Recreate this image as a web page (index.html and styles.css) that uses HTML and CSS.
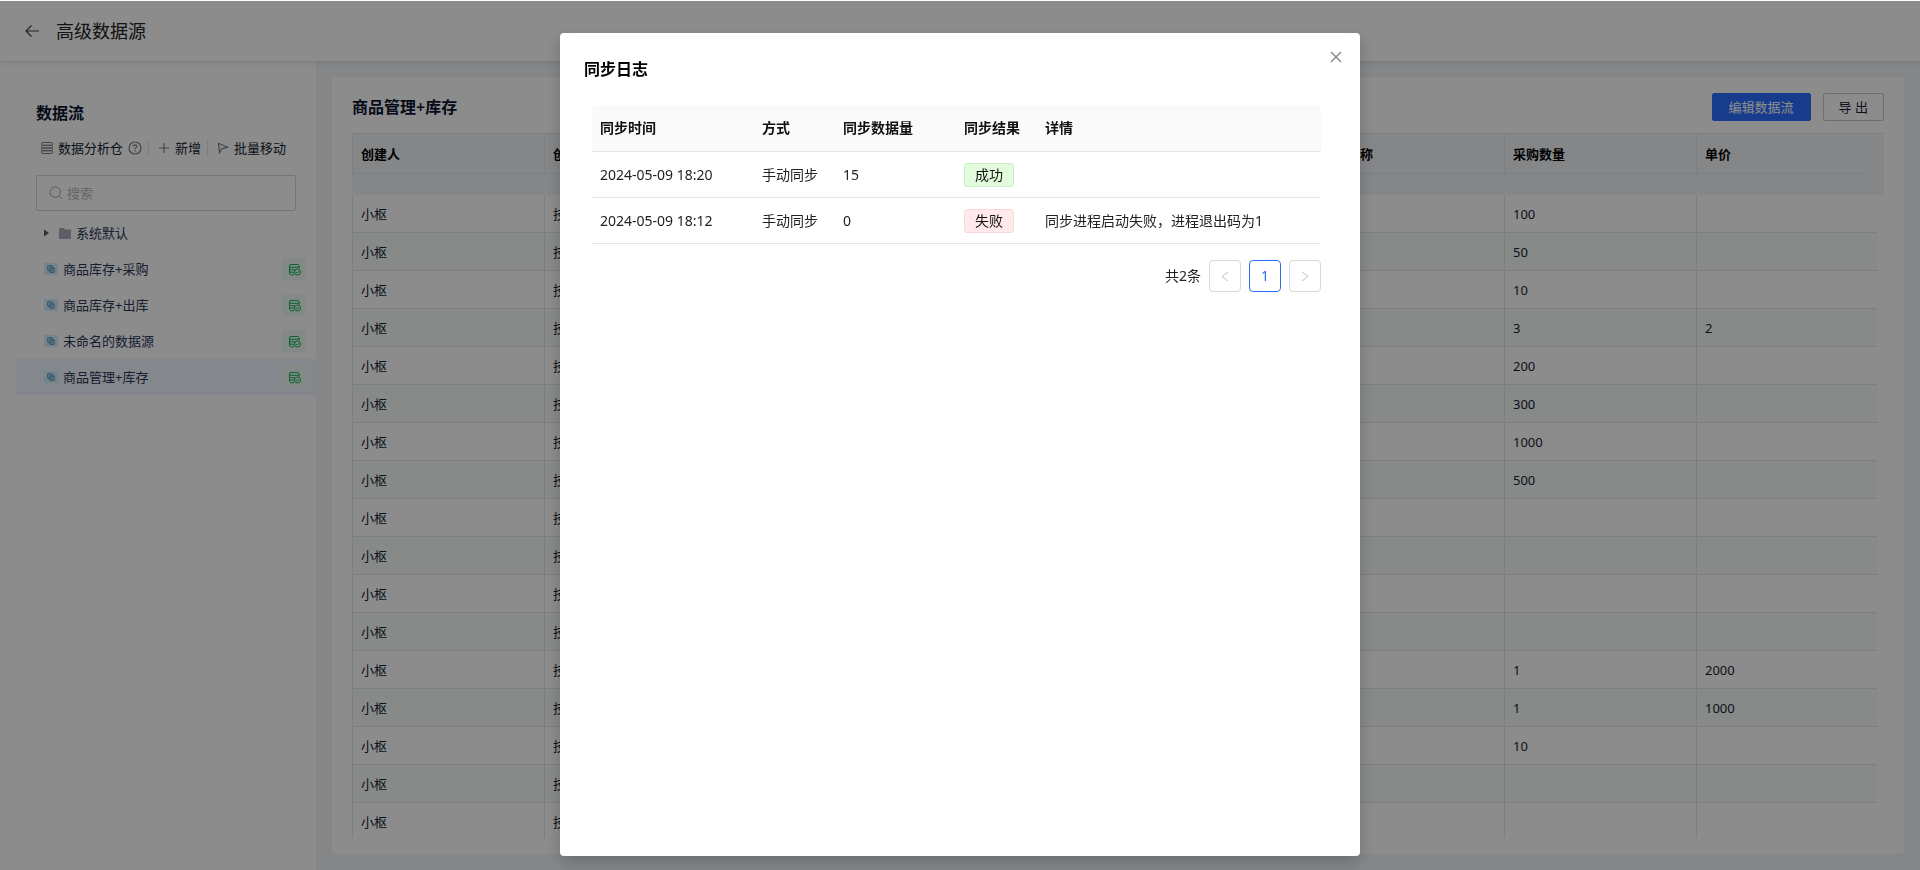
FILE: index.html
```html
<!DOCTYPE html>
<html lang="zh-CN">
<head>
    <meta charset="UTF-8">
    <meta name="viewport" content="width=device-width, initial-scale=1.0">
    <title>高级数据源</title>
    <link rel="stylesheet" href="styles.css">
</head>
<body>
    <svg class="sprite" aria-hidden="true">
        <symbol id="icon-db" viewBox="0 0 12 12">
            <g fill="none" stroke="currentColor">
                <rect x=".5" y=".5" width="11" height="3" rx="1.500"/>
                <rect x=".5" y="3.200" width="11" height="3" rx="1.500"/>
                <rect x=".5" y="5.900" width="11" height="3" rx="1.500"/>
                <rect x=".5" y="8.500" width="11" height="3" rx="1.500"/>
            </g>
        </symbol>
        <symbol id="icon-synced" viewBox="0 0 12 12">
            <g fill="none" stroke="currentColor">
                <rect x=".5" y=".5" width="9.500" height="2.800" rx="1.400"/>
                <path d="M.5 2v7.200c0 .9.800 1.600 2 1.600H5M.5 4.300c0 .8.800 1.500 2 1.500h3.500M.5 6.800c0 .8.800 1.500 2 1.500H5M10 2v2.500"/>
                <circle cx="8.500" cy="8" r="3"/>
                <path d="M7.200 8l1 1 1.700-2"/>
            </g>
        </symbol>
        <symbol id="icon-flow" viewBox="0 0 14 12">
            <rect width="14" height="12" rx="1" fill="#d5efff"/>
            <g fill="none" stroke="#6fa9c8" stroke-width="1.400">
                <rect x="3.700" y="2.700" width="4.500" height="4.500" rx="1"/>
                <rect x="5.700" y="4.700" width="4.500" height="4.500" rx="1"/>
            </g>
        </symbol>
    </svg>

    <header class="topbar">
        <button class="back-btn" type="button" aria-label="返回">
            <svg width="16" height="14" viewBox="0 0 16 14"><path d="M7.500 1.500L2 7l5.500 5.500M2 7h13" fill="none" stroke="currentColor" stroke-width="1.200"/></svg>
        </button>
        <h1>高级数据源</h1>
    </header>

    <div class="layout">
        <aside class="sidebar">
            <h2>数据流</h2>
            <div class="tools">
                <button type="button">
                    <svg width="12" height="12"><use href="#icon-db"/></svg>数据分析仓<svg width="14" height="14" viewBox="0 0 14 14"><g fill="none" stroke="currentColor" stroke-width="1.200"><circle cx="7" cy="7" r="6"/><path d="M5.200 5.600c0-2.300 3.600-2.300 3.600 0 0 1.200-1.800 1.200-1.800 2.600M7 9.300v1.200"/></g></svg>
                </button>
                <button type="button">
                    <svg width="12" height="12" viewBox="0 0 12 12"><path d="M6 1v10M1 6h10" stroke="currentColor" stroke-width="1.200"/></svg>新增
                </button>
                <button type="button">
                    <svg width="12" height="12" viewBox="0 0 12 12"><path d="M1.500 1.200l9 4-5.500 1.500-2.500 4z" fill="none" stroke="currentColor" stroke-width="1.200"/></svg>批量移动
                </button>
            </div>
            <label class="search">
                <svg width="14" height="14" viewBox="0 0 14 14"><path d="M9.800 9.800L13 13M11.500 6.200A5.200 5.200 0 1 1 1 6.200a5.200 5.200 0 0 1 10.500 0z" fill="none" stroke="currentColor"/></svg>
                <input type="text" placeholder="搜索" aria-label="搜索">
            </label>
            <ul class="tree">
                <li class="folder">
                    <svg class="caret" width="6" height="8" viewBox="0 0 6 8"><path d="M0 .5l5 3.500-5 3.500z" fill="currentColor"/></svg>
                    <svg class="dir" width="12" height="12" viewBox="0 0 12 12"><path d="M0 1h5l1 1.500h6V12H0z" fill="currentColor"/></svg>
                    <a href="#default">系统默认</a>
                </li>
                <li>
                    <svg width="14" height="12"><use href="#icon-flow"/></svg>
                    <a href="#flow1">商品库存+采购</a>
                    <span class="state"><svg width="12" height="12"><use href="#icon-synced"/></svg></span>
                </li>
                <li>
                    <svg width="14" height="12"><use href="#icon-flow"/></svg>
                    <a href="#flow2">商品库存+出库</a>
                    <span class="state"><svg width="12" height="12"><use href="#icon-synced"/></svg></span>
                </li>
                <li>
                    <svg width="14" height="12"><use href="#icon-flow"/></svg>
                    <a href="#flow3">未命名的数据源</a>
                    <span class="state"><svg width="12" height="12"><use href="#icon-synced"/></svg></span>
                </li>
                <li class="active">
                    <svg width="14" height="12"><use href="#icon-flow"/></svg>
                    <a href="#flow4">商品管理+库存</a>
                    <span class="state"><svg width="12" height="12"><use href="#icon-synced"/></svg></span>
                </li>
            </ul>
        </aside>

        <main class="card">
            <div class="card-head">
                <h2>商品管理+库存</h2>
                <button class="btn btn-primary" type="button">编辑数据流</button>
                <button class="btn" type="button">导 出</button>
            </div>
            <div class="grid-head">
                <table class="grid">
                    <thead>
                        <tr><th>创建人</th><th>创建人部门</th><th></th><th></th><th></th><th>商品名称</th><th>采购数量</th><th>单价</th></tr>
                    </thead>
                </table>
            </div>
            <div class="grid-body">
                <table class="grid">
                    <tbody>
                        <tr><td>小枢</td><td>技术部</td><td></td><td></td><td></td><td></td><td>100</td><td></td></tr>
                        <tr><td>小枢</td><td>技术部</td><td></td><td></td><td></td><td></td><td>50</td><td></td></tr>
                        <tr><td>小枢</td><td>技术部</td><td></td><td></td><td></td><td></td><td>10</td><td></td></tr>
                        <tr><td>小枢</td><td>技术部</td><td></td><td></td><td></td><td></td><td>3</td><td>2</td></tr>
                        <tr><td>小枢</td><td>技术部</td><td></td><td></td><td></td><td></td><td>200</td><td></td></tr>
                        <tr><td>小枢</td><td>技术部</td><td></td><td></td><td></td><td></td><td>300</td><td></td></tr>
                        <tr><td>小枢</td><td>技术部</td><td></td><td></td><td></td><td></td><td>1000</td><td></td></tr>
                        <tr><td>小枢</td><td>技术部</td><td></td><td></td><td></td><td></td><td>500</td><td></td></tr>
                        <tr><td>小枢</td><td>技术部</td><td></td><td></td><td></td><td></td><td></td><td></td></tr>
                        <tr><td>小枢</td><td>技术部</td><td></td><td></td><td></td><td></td><td></td><td></td></tr>
                        <tr><td>小枢</td><td>技术部</td><td></td><td></td><td></td><td></td><td></td><td></td></tr>
                        <tr><td>小枢</td><td>技术部</td><td></td><td></td><td></td><td></td><td></td><td></td></tr>
                        <tr><td>小枢</td><td>技术部</td><td></td><td></td><td></td><td></td><td>1</td><td>2000</td></tr>
                        <tr><td>小枢</td><td>技术部</td><td></td><td></td><td></td><td></td><td>1</td><td>1000</td></tr>
                        <tr><td>小枢</td><td>技术部</td><td></td><td></td><td></td><td></td><td>10</td><td></td></tr>
                        <tr><td>小枢</td><td>技术部</td><td></td><td></td><td></td><td></td><td></td><td></td></tr>
                        <tr><td>小枢</td><td>技术部</td><td></td><td></td><td></td><td></td><td></td><td></td></tr>
                    </tbody>
                </table>
            </div>
        </main>
    </div>

    <div class="mask">
        <div class="modal" role="dialog" aria-labelledby="modal-title">
            <button class="close-btn" type="button" aria-label="关闭">
                <svg width="12" height="12" viewBox="0 0 12 12"><path d="M1 1l10 10M11 1L1 11" stroke="currentColor" stroke-width="1.500"/></svg>
            </button>
            <h2 id="modal-title">同步日志</h2>
            <div class="modal-body">
                <table class="log">
                    <colgroup>
                        <col class="col-time"><col class="col-mode"><col class="col-count"><col class="col-result"><col>
                    </colgroup>
                    <thead>
                        <tr><th>同步时间</th><th>方式</th><th>同步数据量</th><th>同步结果</th><th>详情</th></tr>
                    </thead>
                    <tbody>
                        <tr><td>2024-05-09 18:20</td><td>手动同步</td><td>15</td><td><span class="tag tag-ok">成功</span></td><td></td></tr>
                        <tr><td>2024-05-09 18:12</td><td>手动同步</td><td>0</td><td><span class="tag tag-fail">失败</span></td><td>同步进程启动失败，进程退出码为1</td></tr>
                    </tbody>
                </table>
                <div class="pager">
                    <span>共2条</span>
                    <button type="button" disabled aria-label="上一页"><svg width="10" height="12" viewBox="0 0 10 12"><path d="M8 2L2 6.500 8 11" fill="none" stroke="currentColor"/></svg></button>
                    <button type="button" class="current">1</button>
                    <button type="button" disabled aria-label="下一页"><svg width="10" height="12" viewBox="0 0 10 12"><path d="M2 2l6 4.500L2 11" fill="none" stroke="currentColor"/></svg></button>
                </div>
            </div>
        </div>
    </div>
</body>
</html>
```

FILE: styles.css
```css
* {
    box-sizing: border-box;
}
body {
    margin: 0;
    height: 100vh;
    display: flex;
    flex-direction: column;
    overflow: hidden;
    font-family: "Noto Sans", "Noto Sans CJK SC", sans-serif;
    font-size: 13px;
    line-height: 20px;
    color: #141e31;
    background: #f2f4f7;
}
h1, h2 {
    margin: 0;
    font-size: 16px;
    line-height: 24px;
    font-weight: 600;
    color: #0c1430;
}
button, input {
    font: inherit;
    color: inherit;
}
button {
    padding: 0;
    border: none;
    background: none;
    cursor: pointer;
}
a {
    color: inherit;
    text-decoration: none;
}
.sprite {
    display: none;
}

/* top bar */
.topbar {
    position: relative;
    display: flex;
    align-items: center;
    gap: 16px;
    height: 62px;
    flex: none;
    padding: 1px 24px 0;
    background: #fff;
    border-bottom: 1px solid #e4e6ea;
    box-shadow: 0 1px 4px rgba(0, 0, 0, 0.1);
}
.topbar h1 {
    font-size: 18px;
    font-weight: 400;
    color: #222;
}
.back-btn {
    display: flex;
    color: #444;
}

.layout {
    display: flex;
    flex: 1;
    min-height: 0;
}

/* sidebar */
.sidebar {
    width: 316px;
    flex: none;
    padding: 39px 0 0 16px;
    background: #fff;
}
.sidebar h2 {
    padding-left: 20px;
}
.tools {
    display: flex;
    align-items: center;
    margin: 13px 0 17px 25px;
}
.tools button {
    display: flex;
    align-items: center;
    gap: 5px;
}
.tools button + button {
    margin-left: 6px;
    padding-left: 9px;
    border-left: 1px solid #e4e6ea;
    line-height: 16px;
}
.tools svg {
    color: #7b7f8c;
}
.search {
    display: flex;
    align-items: center;
    gap: 4px;
    height: 36px;
    margin: 0 20px;
    padding: 0 12px;
    border: 1px solid #d4d4d6;
    border-radius: 2px;
    color: #a6a8ae;
}
.search input {
    flex: 1;
    min-width: 0;
    border: none;
    outline: none;
    background: none;
    padding: 0;
}
.search input::placeholder {
    color: #b8b8bc;
}
.tree {
    list-style: none;
    margin: 4px 0 0;
    padding: 0;
}
.tree li {
    display: flex;
    align-items: center;
    gap: 5px;
    height: 36px;
    padding: 0 10px 0 28px;
    color: #2a3654;
}
.tree .caret {
    color: #555a66;
}
.tree .dir {
    margin-left: 4px;
    color: #a9abb9;
}
.tree .active {
    background: #f0f7ff;
}
.state {
    display: flex;
    align-items: center;
    justify-content: center;
    width: 24px;
    height: 22px;
    margin-left: auto;
    padding: 2px 0 0 2px;
    border-radius: 4px;
    background: #eef9f2;
    color: #0fae57;
}

/* data card */
.card {
    flex: 1;
    min-width: 0;
    display: flex;
    flex-direction: column;
    margin: 15px 16px 16px;
    padding: 0 20px 16px;
    background: #fff;
    border-radius: 4px;
}
.card-head {
    display: flex;
    align-items: center;
    gap: 12px;
    height: 56px;
    flex: none;
    padding-top: 4px;
}
.card-head h2 {
    margin-right: auto;
}
.btn {
    height: 28px;
    padding: 0 15px;
    border: 1px solid #c9cacd;
    border-radius: 2px;
    background: #fff;
}
.btn-primary {
    padding: 0 16px;
    border-color: #2b6eff;
    background: #2b6eff;
    color: #fff;
}
.grid {
    width: 100%;
    table-layout: fixed;
    border-collapse: separate;
    border-spacing: 0;
    border-left: 1px solid #e4e6ea;
}
.grid th, .grid td {
    width: 192px;
    padding: 0 8px;
    text-align: left;
    border-right: 1px solid #e4e6ea;
    border-bottom: 1px solid #e4e6ea;
    white-space: nowrap;
}
.grid th:last-child, .grid td:last-child {
    width: auto;
    border-right: none;
}
.grid th {
    height: 40px;
    font-weight: 600;
    color: #000;
}
.grid td {
    height: 38px;
}
.grid tr:nth-child(even) {
    background: #f8fcfa;
}
.grid-head {
    height: 62px;
    flex: none;
    padding-right: 21px;
    border-top: 1px solid #e4e6ea;
    background: #f2f4f7;
}
.grid-body {
    flex: 1;
    min-height: 0;
    overflow: hidden;
    padding-right: 7px;
}

/* sync log modal */
.mask {
    position: fixed;
    inset: 1px 0 0;
    display: flex;
    justify-content: center;
    padding: 32px 0 14px;
    background: rgba(0, 0, 0, 0.45);
}
.modal {
    position: relative;
    width: 800px;
    padding: 24px;
    border-radius: 4px;
    background: #fff;
    box-shadow: 0 6px 16px rgba(0, 0, 0, 0.2);
}
.modal h2 {
    color: #000;
}
.close-btn {
    position: absolute;
    top: 18px;
    right: 18px;
    display: flex;
    color: #8c8c8c;
}
.modal-body {
    padding: 24px 15px 0 8px;
}
.log {
    width: 100%;
    table-layout: fixed;
    border-collapse: separate;
    border-spacing: 0;
    font-size: 14px;
}
.log th, .log td {
    height: 46px;
    padding: 0 8px;
    text-align: left;
    border-bottom: 1px solid #e6e6e8;
    color: #222;
    white-space: nowrap;
}
.log th {
    height: 47px;
    background: #fafafa;
    font-weight: 600;
    color: #111;
}
.log th:first-child {
    border-top-left-radius: 4px;
}
.log th:last-child {
    border-top-right-radius: 4px;
}
.col-time {
    width: 162px;
}
.col-mode, .col-result {
    width: 81px;
}
.col-count {
    width: 121px;
}
.tag {
    display: inline-block;
    padding: 1px 10px;
    border: 1px solid;
    border-radius: 3px;
    color: #111;
}
.tag-ok {
    border-color: #c9efc0;
    background: #e2fbdc;
}
.tag-fail {
    border-color: #fbd7db;
    background: #ffe9eb;
}
.pager {
    display: flex;
    justify-content: flex-end;
    align-items: center;
    gap: 8px;
    margin-top: 16px;
    font-size: 14px;
    color: #222;
}
.pager button {
    display: flex;
    align-items: center;
    justify-content: center;
    width: 32px;
    height: 32px;
    border: 1px solid #d9d9d9;
    border-radius: 4px;
    color: #bfbfbf;
}
.pager .current {
    border-color: #2b6eff;
    color: #2b6eff;
}
```
